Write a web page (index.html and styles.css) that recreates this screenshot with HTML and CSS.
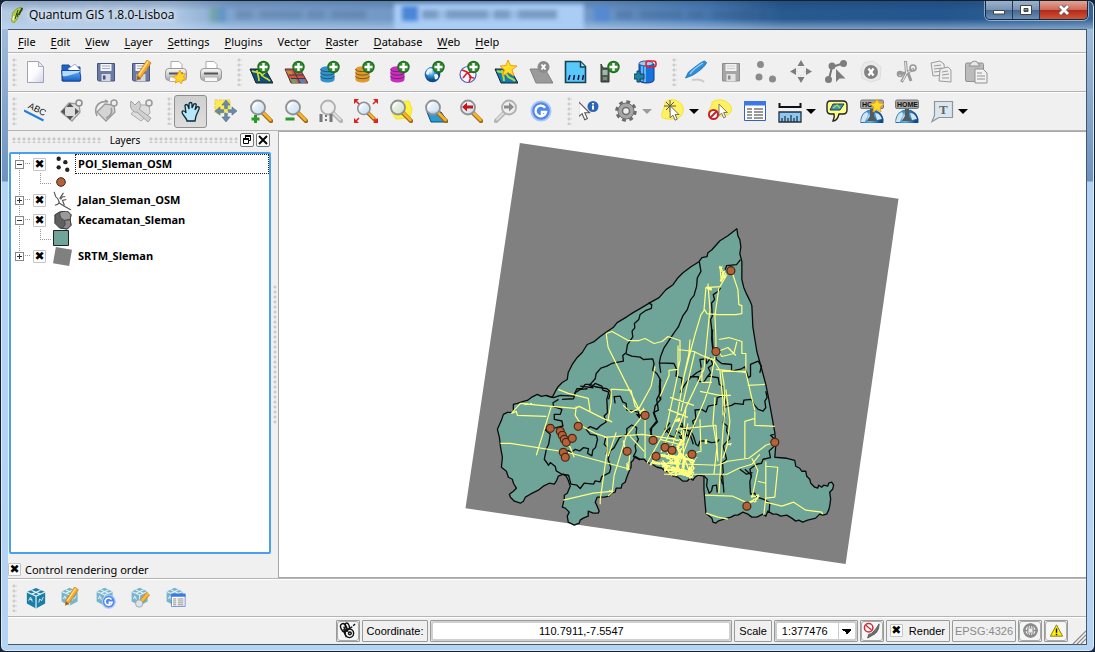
FILE: index.html
```html
<!DOCTYPE html>
<html lang="en">
<head>
<meta charset="utf-8">
<title>Quantum GIS 1.8.0-Lisboa</title>
<link rel="stylesheet" href="styles.css">
</head>
<body>
<svg class="defs" aria-hidden="true">
  <defs>
    <linearGradient id="gPage" x1="0" y1="0" x2="1" y2="1"><stop offset="0" stop-color="#fff"/><stop offset=".5" stop-color="#fdfdff"/><stop offset="1" stop-color="#cfd3ea"/></linearGradient>
    <linearGradient id="gBlue" x1="0" y1="0" x2="0" y2="1"><stop offset="0" stop-color="#6fb4f5"/><stop offset="1" stop-color="#1560c8"/></linearGradient>
    <linearGradient id="gGrey" x1="0" y1="0" x2="0" y2="1"><stop offset="0" stop-color="#fafafa"/><stop offset="1" stop-color="#a9a9a9"/></linearGradient>
    <linearGradient id="gLens" x1="0" y1="0" x2="1" y2="1"><stop offset="0" stop-color="#fff"/><stop offset="1" stop-color="#bcd8f2"/></linearGradient>
    <radialGradient id="gGlobe" cx=".4" cy=".35"><stop offset="0" stop-color="#d5ecfa"/><stop offset=".45" stop-color="#3f9bd8"/><stop offset="1" stop-color="#0e4a8c"/></radialGradient>
    <symbol id="badge" viewBox="0 0 24 24"><circle cx="14.500" cy="7" r="6.200" fill="#1d6b1d"/><circle cx="14.500" cy="7" r="5" fill="#2f8a2c"/><path d="M14.500 3v8M10.500 7h8" stroke="#fff" stroke-width="2.400"/></symbol>
    <symbol id="lens" viewBox="0 0 24 24"><path d="M14 14l8 8" stroke="#9b6a12" stroke-width="4.500" stroke-linecap="round"/><path d="M14 13.500l7.500 7.500" stroke="#fbb32b" stroke-width="2.500" stroke-linecap="round"/><circle cx="9" cy="8.500" r="7" fill="url(#gLens)" fill-opacity=".85" stroke="#8e9297" stroke-width="1.800"/><path d="M4.500 8a5 5 0 0 1 4-4" stroke="#fff" stroke-width="1.500" fill="none"/></symbol>
    <symbol id="lensGrey" viewBox="0 0 24 24"><path d="M14 14l8 8" stroke="#b5b5b5" stroke-width="4.500" stroke-linecap="round"/><path d="M14 13.500l7 7" stroke="#ddd" stroke-width="2" stroke-linecap="round"/><circle cx="9" cy="8.500" r="7" fill="#eee" stroke="#b0b0b0" stroke-width="1.800"/></symbol>
    <symbol id="floppy" viewBox="0 0 24 24"><path d="M3.500 3.500h17v17.500h-16l-1-1z" fill="#6b7ba5" stroke="#4a5679"/><path d="M6.500 4h11v7h-11z" fill="#f4f6fb"/><path d="M8 6h8M8 8.500h8" stroke="#a5acc0"/><path d="M7.500 14h9v7h-9z" fill="#d4d8e2"/><path d="M9 15.500h2.500v4h-2.500z" fill="#4a5679"/></symbol>
    <symbol id="printer" viewBox="0 0 24 24"><path d="M7 9V1.500h8l3 3V9z" fill="#fff" stroke="#aaa"/><rect x="1.500" y="8.500" width="21" height="12" rx="3.500" fill="url(#gGrey)" stroke="#999"/><path d="M5 13.500h14" stroke="#555" stroke-width="2"/><path d="M5.500 17h13v4.500h-13z" fill="#f7f7f7" stroke="#b0b0b0"/></symbol>
    <symbol id="star" viewBox="0 0 24 24"><path d="M12 0l2.500 7L22 6l-4.500 6 5.500 4.500-7 .5-1.500 7-4.500-5-6 3.500 1.500-7L0 11.500l7-2.500z" fill="#ffd528" stroke="#ef9f14" stroke-width="1.500"/></symbol>
    <symbol id="pencil" viewBox="0 0 24 24"><path d="M17 1l4 3-9.500 14-4.500 3 .5-5.500z" fill="#f9a825" stroke="#c57a10" stroke-width=".8"/><path d="M18 2.500L9 16" stroke="#ffe08a" stroke-width="1.500"/><path d="M7 21l.5-4 3 2z" fill="#8a5a20"/></symbol>
    <symbol id="db" viewBox="0 0 24 24"><path d="M1.500 9v10.500c0 4 14 4 14 0V9z"/><ellipse cx="8.500" cy="9" rx="7" ry="2.800"/><path d="M1.500 9c0 3.500 14 3.500 14 0M1.500 12.500c0 3.500 14 3.500 14 0M1.500 16c0 3.500 14 3.500 14 0" fill="none" stroke="#222" stroke-opacity=".55"/></symbol>
    <symbol id="globe" viewBox="0 0 24 24"><circle cx="12" cy="12" r="11" fill="url(#gGlobe)"/><path d="M5 5c4-3 8-2 7 1s-5 2-5 5-5 1-4-2zM14 12c4-2 7 0 6 4s-6 4-5 0z" fill="#e9f5fb"/></symbol>
    <symbol id="arrow" viewBox="0 0 24 24"><path d="M3 1v17l4-3.500 3 7 3-1.500-3-6.500h5.500z" fill="#fff" stroke="#555" stroke-width="1.200"/></symbol>
    <symbol id="cross4" viewBox="0 0 24 24"><path d="M12 0l4.500 5.500h-3v4h-3v-4h-3zM12 24l4.500-5.500h-3v-4h-3v4h-3zM0 12l5.500-4.500v3h4v3h-4v3zM24 12l-5.500-4.500v3h-4v3h4v3z"/></symbol>
    <symbol id="cube" viewBox="0 0 24 24"><path d="M12 1l10 4.500v12.500l-10 5.500-10-5.500V5.500z"/><path d="M2 5.500l10 4.500 10-4.500M12 10v13.500M7 3.500l10 4.500M17 3.500L7 8" stroke="#e4f2f7" fill="none" stroke-width="1.300"/><path d="M4 15l2-4 2 5M15 17l1-4 2 2 2-4M5 13.500h3" stroke="#e4f2f7" fill="none"/></symbol>
    <symbol id="table" viewBox="0 0 24 24"><path d="M1.500 2.500h21v19h-21z" fill="#fff" stroke="#3261c4"/><path d="M1 2h22v4.500H1z" fill="#3a78e8"/><path d="M4 10h5M11 10h9M4 13h5M11 13h9M4 16h5M11 16h9M4 19h5M11 19h9" stroke="#777" stroke-width="1.300"/></symbol>
    <symbol id="gBadge" viewBox="0 0 24 24"><circle cx="12" cy="12" r="10.500" fill="#5188ea" stroke="#a9c5f7" stroke-width="2"/><path d="M16.500 8.500A5.800 5.800 0 1 0 17.500 13h-4.500v3.500" fill="none" stroke="#fff" stroke-width="2.600"/></symbol>
    <symbol id="home" viewBox="0 0 24 24"><circle cx="12" cy="22" r="11.500" fill="url(#gGlobe)"/><path d="M3 16c3-4 5-3 5-1s-2 4-3 8H1c0-3 1-5 2-7zM15 14c4 0 6 3 7 6l-5 1z" fill="#d3e6ef"/><path d="M10 8h4v9l3 5H7l3-5z" fill="#555a5e"/><rect x=".5" y="1" width="23" height="8.500" rx="1.500" fill="#a6a6a6" stroke="#777"/></symbol>
  </defs>
</svg>

<div class="window">
  <header class="titlebar">
    <div class="backdrop" aria-hidden="true"><i class="blob drive"></i><i class="lit"></i><i class="blob doc1"></i><i class="blob doc2"></i><i class="smear s1"></i><i class="smear s2"></i><i class="smear s3"></i></div>
    <svg class="appicon" viewBox="0 0 16 16"><path d="M13 0c1 3-2 5-3 8s-2 5-5 8c-3-1-3-4-2-5S2 7 5 4s5-3 8-4z" fill="#b4cb45" stroke="#7f9930" stroke-width=".8"/><path d="M13 1c0 3-3 4-3 7" stroke="#2c4a12" stroke-width="2" fill="none"/><path d="M9 3L6 12M7 7l2 0-1 3" stroke="#31461a" stroke-width="1" fill="none"/><path d="M5 9l-1 4" stroke="#f4f9c0" stroke-width="1.500"/></svg>
    <h1>Quantum GIS 1.8.0-Lisboa</h1>
    <div class="winbtns">
      <button class="min" aria-label="Minimize"><svg viewBox="0 0 12 12"><path d="M.5 6.500h11v3.500H.5z" fill="#fff" stroke="#444"/></svg></button><button class="max" aria-label="Maximize"><svg viewBox="0 0 12 12"><path d="M.5 1.500h11v9H.5zM4 4.500h4v3H4z" fill="#fff" fill-rule="evenodd" stroke="#444"/></svg></button><button class="close" aria-label="Close"><svg viewBox="0 0 14 12"><path d="M3 2l8 8M11 2l-8 8" stroke="#555" stroke-width="4.500"/><path d="M3 2l8 8M11 2l-8 8" stroke="#fff" stroke-width="2.800"/></svg></button>
    </div>
  </header>

  <div class="client">
    <nav class="menubar">
      <button><u>F</u>ile</button><button><u>E</u>dit</button><button><u>V</u>iew</button><button><u>L</u>ayer</button><button><u>S</u>ettings</button><button><u>P</u>lugins</button><button>Vect<u>o</u>r</button><button><u>R</u>aster</button><button><u>D</u>atabase</button><button><u>W</u>eb</button><button><u>H</u>elp</button>
    </nav>

    <div class="toolbar">
      <div class="group"><i class="grip"></i>
        <button aria-label="New project"><svg viewBox="0 0 24 24"><path d="M3.500 1.500h11l5 5v16h-16z" fill="url(#gPage)" stroke="#9fa3b5"/><path d="M14.500 1.500v5h5z" fill="#e8eaf4" stroke="#a9adc0"/></svg></button>
        <button aria-label="Open project"><svg viewBox="0 0 24 24"><path d="M3 5h7l1 2h10v14H3z" fill="#1f63c6" stroke="#164a9c"/><path d="M9 9l7-5 5 6-4 7z" fill="#fff" stroke="#aac"/><path d="M2.500 10.500h18c-1 3 2 2 1 10.500H4z" fill="url(#gBlue)" stroke="#164a9c"/><path d="M3.500 16c5 1 10-2 17.500-4l-.5-1h-17z" fill="#b5dcff"/></svg></button>
        <button aria-label="Save project"><svg viewBox="0 0 24 24"><use href="#floppy"/></svg></button>
        <button aria-label="Save project as"><svg viewBox="0 0 24 24"><use href="#floppy"/><use href="#pencil" x="1" y="-1"/></svg></button>
        <button aria-label="New print composer"><svg viewBox="0 0 24 24"><use href="#printer"/><use href="#star" x="9" y="10" width="14" height="14"/></svg></button>
        <button aria-label="Composer manager"><svg viewBox="0 0 24 24"><use href="#printer"/></svg></button>
      </div>
      <div class="group"><i class="grip"></i>
        <button aria-label="Add vector layer"><svg viewBox="0 0 24 24"><path d="M1 9h15l8 14H7z" fill="#154f78" stroke="#123"/><path d="M3 11c4 2 8 0 10 4s4 2 8 6M8 10c0 4 2 6 2 11M12 16l5-4" stroke="#cde02c" stroke-width="1.600" fill="none"/><use href="#badge"/></svg></button>
        <button aria-label="Add raster layer"><svg viewBox="0 0 24 24"><path d="M1 9h15l8 14H7z" fill="#c9564c" stroke="#533"/><path d="M2 11h5l2 4H5z" fill="#c98a3c"/><path d="M6 18h5l3 5H8z" fill="#7c9a62"/><path d="M5 15h14M7 18.500h14M9 9l7 14" stroke="#4a3040"/><path d="M15 19h5l2 4h-5z" fill="#5b7fb0"/><use href="#badge"/></svg></button>
        <button aria-label="Add PostGIS layer" class="c-blue"><svg viewBox="0 0 24 24"><use href="#db"/><use href="#badge"/></svg></button>
        <button aria-label="Add SpatiaLite layer" class="c-orange"><svg viewBox="0 0 24 24"><use href="#db"/><use href="#badge"/></svg></button>
        <button aria-label="Add MSSQL layer" class="c-pink"><svg viewBox="0 0 24 24"><use href="#db"/><use href="#badge"/></svg></button>
        <button aria-label="Add WMS layer"><svg viewBox="0 0 24 24"><use href="#globe" x="0" y="6" width="17" height="17"/><use href="#badge"/></svg></button>
        <button aria-label="Add WFS layer"><svg viewBox="0 0 24 24"><circle cx="9" cy="14.500" r="8" fill="#f6f6ff" stroke="#4b63b8" stroke-width="1.200"/><path d="M3 10l5 2 4 5-2 5M9 13l5-2M4 18l4-5M10 17l5 1" stroke="#dc1d2c" stroke-width="1.600" fill="none"/><use href="#badge"/></svg></button>
        <button aria-label="New shapefile layer"><svg viewBox="0 0 24 24"><path d="M1 9h15l8 14H7z" fill="#1878b0" stroke="#123"/><path d="M3 11c4 2 8 0 10 4s4 2 8 6M8 10c0 4 2 6 2 11" stroke="#a6dc3c" stroke-width="2" fill="none"/><path d="M14 0l2.500 5.500 6.500.5-5 4 2 6-6-3.500L8.500 16l2-6-4.500-4 6-.5z" fill="#ffdf25" stroke="#f09c12"/></svg></button>
        <button aria-label="Remove layer"><svg viewBox="0 0 24 24"><path d="M1 9h15l8 14H7z" fill="#9a9a9a" stroke="#818181"/><circle cx="14.500" cy="7" r="6" fill="#8b8b8b"/><path d="M12.500 4.500l4 5M16.500 4.500l-4 5" stroke="#fff" stroke-width="2"/></svg></button>
        <button aria-label="Add delimited text layer"><svg viewBox="0 0 24 24"><path d="M1.500 1.500h15l5 5v16h-20z" fill="#58c9f8" stroke="#164050" stroke-width="1.600"/><path d="M16.500 2v5h5" stroke="#164050" stroke-width="1.500" fill="#a9e2fa"/><path d="M6 15l-1.500 5M10.500 15l-1 5M15 15l-1 5M19.500 15l-1 5" stroke="#114" stroke-width="1.500"/></svg></button>
        <button aria-label="Create GPX layer"><svg viewBox="0 0 24 24"><path d="M2 4l2 4h6v14H2z" fill="#4d5b50" stroke="#2e3830"/><path d="M3.500 10h5v5h-5z" fill="#9fb7a5"/><path d="M4 17h4v3h-4z" fill="#7d8a80"/><use href="#badge"/></svg></button>
        <button aria-label="Add Oracle layer"><svg viewBox="0 0 24 24"><path d="M5 4v16c0 4 15 4 15 0V4z" fill="#1573dc" stroke="#123a8c"/><path d="M8 5v16M11 6v16" stroke="#8ac3fa" stroke-width="1.500"/><ellipse cx="12" cy="3.500" rx="7" ry="2.500" fill="#a7c9ee" stroke="#2356a0"/><rect x="12" y="1" width="10" height="6" rx="2.500" fill="none" stroke="#ec1c2c" stroke-width="1.600"/><path d="M3 11h3v3h4v5H6v3H3v-3H0v-5h3z" fill="#1b83a4" stroke="#17475c"/></svg></button>
      </div>
      <div class="group"><i class="grip"></i>
        <button aria-label="Toggle editing"><svg viewBox="0 0 24 24"><path d="M8 20c5-1 9-1 12 2" stroke="#ccc" stroke-width="2" fill="none"/><path d="M20.500 1l2 1.500c0 3-10 11-14.500 13L1.500 18l3-6c4-3 12-10 16-11z" fill="#2b90dc" stroke="#1b6fb4" stroke-width=".8"/><path d="M19 3C14 6 9 10 6 14" stroke="#9ad1f7" stroke-width="1.300" fill="none"/></svg></button>
        <button aria-label="Save edits" disabled><svg viewBox="0 0 24 24"><path d="M3.500 3.500h17v17.500h-17z" fill="#a5a5a5" stroke="#8e8e8e"/><path d="M6.500 4h11v7h-11z" fill="#f1f1f1"/><path d="M8 6h8M8 8.500h8" stroke="#ccc"/><path d="M7.500 14h9v7h-9z" fill="#e2e2e2"/><path d="M9 15.500h2.500v4h-2.500z" fill="#8c8c8c"/></svg></button>
        <button aria-label="Add feature" disabled><svg viewBox="0 0 24 24" fill="#8b8b8b"><circle cx="6.500" cy="4.500" r="3.500"/><circle cx="5" cy="17" r="3.500"/><circle cx="18.500" cy="19" r="3.500"/></svg></button>
        <button aria-label="Move feature" disabled><svg viewBox="0 0 24 24" fill="#7d7d7d"><path d="M12 0l3.500 6h-7zM12 23l3.500-6h-7zM1 11.500l6-3.500v7zM23 11.500l-6-3.500v7z"/><circle cx="12" cy="11.500" r="4" fill="none" stroke="#ccc" stroke-dasharray="1 2"/></svg></button>
        <button aria-label="Node tool" disabled><svg viewBox="0 0 24 24" fill="#7d7d7d"><path d="M5 19L8 7l12-4" stroke="#777" stroke-width="2" fill="none"/><circle cx="8" cy="6" r="3.500"/><circle cx="19.500" cy="3.500" r="3.500"/><circle cx="4.500" cy="19.500" r="3.500"/><path d="M12 9v13l3.500-3.500h6z"/></svg></button>
        <button aria-label="Delete selected" disabled><svg viewBox="0 0 24 24"><path d="M5 3l9-2 8 6-1 12-9 3-9-4-1-9z" fill="#ebebeb" stroke="#dcdcdc"/><circle cx="12" cy="12" r="7" fill="#838383"/><path d="M9.500 8.500l5 7M14.500 8.500l-5 7" stroke="#fff" stroke-width="2.200"/></svg></button>
        <button aria-label="Cut features" disabled><svg viewBox="0 0 24 24" fill="none"><path d="M11.500 1l1 12-5 9M20 9l-8 4-8 .5M14 13l3 8" stroke="#999" stroke-width="3"/><path d="M11.500 2l1 11-4 8M19 9.500l-7 3.500" stroke="#eee"/><circle cx="19" cy="8" r="3" stroke="#999" stroke-width="1.600"/><circle cx="6" cy="14" r="2.500" stroke="#999" stroke-width="1.600"/></svg></button>
        <button aria-label="Copy features" disabled><svg viewBox="0 0 24 24" fill="#eee" stroke="#9b9b9b"><path d="M2 3l9-2 4 3 1 11-12 1z"/><path d="M5 6l7-1M5 9l8-1M5 12l9-1"/><path d="M11 9l8-2 3 3v12l-12-1z"/><path d="M13 12l6-1M13 15l7-1M13 18l7 0"/></svg></button>
        <button aria-label="Paste features" disabled><svg viewBox="0 0 24 24" stroke="#909090"><rect x="1.500" y="3" width="18" height="18.500" rx="1.500" fill="#bbb"/><path d="M5 6l3-4c1-1 4-1 5 0l3 4z" fill="#e9e9e9"/><path d="M11 9h8l4 4v10H11z" fill="#f2f2f2"/><path d="M13 13h5M13 16h8M13 19h8"/></svg></button>
      </div>
    </div>

    <div class="toolbar">
      <div class="group"><i class="grip"></i>
        <button aria-label="Labeling"><svg viewBox="0 0 24 24"><g transform="rotate(27 12 12)"><text x="3" y="13" class="abc">ABC</text><path d="M1 17h22" stroke="#1e7fe0" stroke-width="2.200"/></g></svg></button>
        <button aria-label="Move label" disabled><svg viewBox="0 0 24 24"><path d="M2 13l8-9 10 1 1 8-8 9z" fill="#ddd" stroke="#9c9c9c" stroke-width="1.300"/><circle cx="20" cy="4" r="3" fill="#eee" stroke="#8c8c8c" stroke-width="1.500"/><path d="M11 4l3.500 4h-7zM11 21l3.500-4h-7zM2 12.500l4-3.500v7zM20 12.500l-4-3.500v7z" fill="#555"/></svg></button>
        <button aria-label="Rotate label" disabled><svg viewBox="0 0 24 24"><path d="M3 13l8-8 9 1 1 7-9 9z" fill="#d4d4d4" stroke="#999" stroke-width="1.300"/><circle cx="20" cy="4" r="3" fill="#eee" stroke="#999" stroke-width="1.500"/><path d="M3 17C-1 8 5 1 14 3M14 3l-3-2M17 9c2 4-1 9-5 10" fill="none" stroke="#999" stroke-width="1.600"/></svg></button>
        <button aria-label="Change label" disabled><svg viewBox="0 0 24 24"><path d="M2 15l8-9 10 0 1 8-9 8z" fill="#ddd" stroke="#aaa"/><circle cx="20" cy="4" r="3" fill="#eee" stroke="#999" stroke-width="1.500"/><path d="M2 2l4 4 4-4c2 3 2 6 0 8l12 9-3 4-11-10C4 14 0 9 2 2z" fill="#d0d0d0" stroke="#a0a0a0"/></svg></button>
      </div>
      <div class="group"><i class="grip"></i>
        <button class="pressed" aria-label="Pan map"><svg viewBox="0 0 24 24"><path d="M8 22c0-3-5-6-5-9 1-2 3-1 4 1L6 7c0-2 2-2 3 0l1 3V5c0-2 3-2 3 0v4l2-4c1-1 3 0 2 2l-1 4 2-3c1-1 3 0 2 2l-3 7-1 5z" fill="#b9e6f8" stroke="#0c2a38" stroke-width="1.300"/></svg></button>
        <button aria-label="Pan map to selection"><svg viewBox="0 0 24 24"><path d="M1 1h15v8l-5 5H1z" fill="#ffe957" stroke="#e5cf3b" stroke-dasharray="3 1"/><use href="#cross4" fill="#6a8ba8" stroke="#4a6b88" stroke-width=".6" x="1" y="1" width="22" height="22"/></svg></button>
        <button aria-label="Zoom in"><svg viewBox="0 0 24 24"><use href="#lens"/><path d="M6.500 16v8M2.500 20h8" stroke="#2a9a2a" stroke-width="3"/></svg></button>
        <button aria-label="Zoom out"><svg viewBox="0 0 24 24"><use href="#lens"/><path d="M1.500 20h9" stroke="#2a9a2a" stroke-width="3"/></svg></button>
        <button aria-label="Zoom to native resolution" disabled><svg viewBox="0 0 24 24"><use href="#lensGrey"/><path d="M2 15v8M12 15v8" stroke="#777" stroke-width="3"/><path d="M7 16v2M7 20v2" stroke="#777" stroke-width="2"/></svg></button>
        <button aria-label="Zoom full"><svg viewBox="0 0 24 24"><use href="#lens" x="2" y="2" width="21" height="21"/><path d="M0 0h5L0 5zM24 0v5l-5-5zM0 24v-5l5 5zM24 24h-5l5-5z" fill="#d22"/><path d="M2 2l3 3M22 2l-3 3M2 22l3-3M22 22l-2-2" stroke="#d22" stroke-width="1.500"/></svg></button>
        <button aria-label="Zoom to selection"><svg viewBox="0 0 24 24"><path d="M4 3l16-1 3 8-2 9-14 1-4-6z" fill="#fff23c" stroke="#f2e339"/><use href="#lens"/></svg></button>
        <button aria-label="Zoom to layer"><svg viewBox="0 0 24 24"><path d="M3 13h14l7 10H7z" fill="#2a9ad2" stroke="#144e70"/><use href="#lens"/></svg></button>
        <button aria-label="Zoom last"><svg viewBox="0 0 24 24"><use href="#lens"/><path d="M3 8l5-4.500v3h6v3H8v3z" fill="#c81414"/></svg></button>
        <button aria-label="Zoom next" disabled><svg viewBox="0 0 24 24"><g transform="translate(24 0) scale(-1 1)"><use href="#lensGrey"/></g><path d="M20 8l-5-4.500v3h-5v3h5v3z" fill="#8b8b8b"/></svg></button>
        <button aria-label="Refresh"><svg viewBox="0 0 24 24"><use href="#gBadge" x="1" y="1" width="22" height="22"/></svg></button>
      </div>
      <div class="group"><i class="grip"></i>
        <button aria-label="Identify features"><svg viewBox="0 0 24 24"><use href="#arrow" x="-3" y="2" width="21" height="21"/><circle cx="14" cy="7.500" r="5.500" fill="#2c66b4"/><path d="M14 4v1.500M14 6.500v4" stroke="#fff" stroke-width="2"/></svg></button>
        <button class="drop dim" aria-label="Run feature action" disabled><svg viewBox="0 0 24 24"><circle cx="12" cy="12" r="9" fill="none" stroke="#6c6c6c" stroke-width="3.500" stroke-dasharray="3.700 3.370"/><circle cx="12" cy="12" r="8" fill="#a5a5a5" stroke="#6f6f6f"/><circle cx="12" cy="12" r="3.500" fill="#eee" stroke="#6f6f6f" stroke-width="1.500"/></svg></button>
        <button class="drop" aria-label="Select features"><svg viewBox="0 0 24 24"><path d="M4 3c7-4 14-2 17 3s0 10-2 12-13 3-17 1 3-12 2-16z" fill="#fff25e" stroke="#f1e338"/><path d="M9 1v12M3 7h12M5 3l8 8M13 3l-8 8" stroke="#555"/><use href="#arrow" x="7" y="6" width="17" height="17"/></svg></button>
        <button aria-label="Deselect all"><svg viewBox="0 0 24 24"><path d="M4 3c7-4 14-2 18 3s-1 10-3 10-14 3-18 1 4-10 3-14z" fill="#fff25e" stroke="#f1e338"/><use href="#arrow" x="9" y="4" width="16" height="17"/><circle cx="5.500" cy="15.500" r="4.500" fill="#fff" stroke="#c8202a" stroke-width="2"/><path d="M2.500 18.500l6-6" stroke="#c8202a" stroke-width="2"/></svg></button>
        <button aria-label="Open attribute table"><svg viewBox="0 0 24 24"><use href="#table"/></svg></button>
        <button class="drop" aria-label="Measure"><svg viewBox="0 0 24 24"><path d="M1.500 4v4h21V4" fill="none" stroke="#111" stroke-width="2"/><path d="M1 13h22v10H1z" fill="#8cc8f3" stroke="#23303a" stroke-width="1.300"/><path d="M4 23v-4M7 23v-6M10 23v-4M13 23v-7M16 23v-4M19 23v-6" stroke="#23303a" stroke-width="1.200"/></svg></button>
        <button aria-label="Map tips"><svg viewBox="0 0 24 24"><path d="M5 2h13c3 0 4 2 4 4v5c0 3-2 4-4 4h-4c-1 4-3 7-6 7 1-2 2-4 1-7H6c-3 0-4-2-4-4V6c0-2 1-4 3-4z" fill="#ffff8a" stroke="#222" stroke-width="1.400"/><path d="M8 5h11l-4 6H5z" fill="#3d97b4" stroke="#1d4250"/><path d="M8 9l4-3 3 3" stroke="#c2d854" fill="none" stroke-width="1.300"/></svg></button>
        <button aria-label="New bookmark"><svg viewBox="0 0 24 24"><use href="#home"/><text x="2" y="8" class="home">HO</text><path d="M17 0l2 4 5 1-4 3 1 5-4-2.500L13 13l1-5-4-3 5-1z" fill="#ffdc20" stroke="#f0a51a"/></svg></button>
        <button aria-label="Show bookmarks"><svg viewBox="0 0 24 24"><use href="#home"/><text x="2" y="8" class="home">HOME</text></svg></button>
        <button class="drop" aria-label="Text annotation"><svg viewBox="0 0 24 24"><path d="M4.500 2.500h18v16H9l-7 4 2.500-6z" fill="#dce6ee" stroke="#8c959c" stroke-width="1.200"/><text x="9" y="15" class="anno">T</text></svg></button>
      </div>
    </div>

    <main class="workspace">
      <section class="dock" aria-label="Layers">
        <div class="docktitle"><i></i><span>Layers</span><i></i>
          <button aria-label="Float"><svg viewBox="0 0 12 12" fill="#fff" stroke="#000"><path d="M4.500 1.500h5v5h-5z"/><path d="M4 2h6" stroke-width="2"/><path d="M2.500 4.500h5v5h-5z"/><path d="M2 5h6" stroke-width="2"/></svg></button>
          <button aria-label="Close panel"><svg viewBox="0 0 12 12"><path d="M2 2l8 8M10 2l-8 8" stroke="#000" stroke-width="1.800"/></svg></button>
        </div>
        <ul class="tree">
          <li class="row"><button class="exp" aria-label="Collapse"></button><input type="checkbox" id="l1" checked><svg viewBox="0 0 20 20" fill="#222"><circle cx="6" cy="4" r="2.300"/><circle cx="13" cy="7.500" r="2.300"/><circle cx="6" cy="13" r="2.300"/><circle cx="15" cy="15.500" r="2.300"/></svg><label for="l1" class="focus">POI_Sleman_OSM</label></li>
          <li class="sub"><svg viewBox="0 0 16 16"><circle cx="8" cy="8" r="4.300" fill="#b5623a" stroke="#3d2012"/></svg></li>
          <li class="row"><button class="exp plus" aria-label="Expand"></button><input type="checkbox" id="l2" checked><svg viewBox="0 0 20 20" fill="none" stroke="#555" stroke-width="1.200"><path d="M1 1c2 2 0 5 4 7l2 5 5 3 7 4M2 15l3-1 2-3M7 8l4-6M8 9l2-3 3 0M12 15l-2-5 4-1"/></svg><label for="l2">Jalan_Sleman_OSM</label></li>
          <li class="row"><button class="exp" aria-label="Collapse"></button><input type="checkbox" id="l3" checked><svg viewBox="0 0 20 20"><path d="M2 4l5-3 8-1 4 4-1 5 1 6-4 4-8-1-5-5z" fill="#606060" stroke="#333"/><path d="M8 1l7-1 4 4-1 5-6 1-4-3-1-4z" fill="#9a9a9a" stroke="#444"/><path d="M12 10l6-1 1 6-4 4-5-1 3-4z" fill="#888" stroke="#444"/></svg><label for="l3">Kecamatan_Sleman</label></li>
          <li class="sub"><svg viewBox="0 0 16 16"><path d="M.5.500h15v15H.5z" fill="#6fa598" stroke="#222"/></svg></li>
          <li class="row"><button class="exp plus" aria-label="Expand"></button><input type="checkbox" id="l4" checked><svg viewBox="0 0 20 20"><path d="M3 0l17 3-3 17L0 17z" fill="#808080"/></svg><label for="l4">SRTM_Sleman</label></li>
        </ul>
        <div class="order"><input type="checkbox" id="order" checked><label for="order">Control rendering order</label></div>
      </section>
      <i class="splitter"></i>
      <section class="canvas" aria-label="Map canvas">
        <svg viewBox="279 132 807 446">
          <defs><filter id="rough" x="-5%" y="-5%" width="110%" height="110%"><feTurbulence type="fractalNoise" baseFrequency=".16" numOctaves="1" seed="4"/><feDisplacementMap in="SourceGraphic" scale="4" xChannelSelector="R" yChannelSelector="G"/></filter></defs>
          <path d="M519.500 143L899 199l-53 366L465 509z" fill="#808080"/>
          <path class="edge" d="M737 229L738 236L740 240L741 247L740 254L742 262L742 280L744 288L747 295L750 301L752 306L753 327L757 352L762 370L766 385L769 400L775 433L776 446L775 458L787 459L791 460L795 461L796 467L800 469L802 472L806 472L807 477L810 480L811 484L815 488L818 489L819 486L822 488L824 486L828 487L829 484L832 483L834 486L833 490L830 493L831 500L830 507L829 511L827 515L823 516L820 515L816 519L812 520L808 521L803 523L799 521L796 522L792 519L787 516L781 517L777 515L773 515L768 512L766 517L763 515L757 518L752 518L748 515L743 513L738 516L735 516L731 518L727 519L721 521L718 522L716 524L713 523L712 519L706 514L705 503L704 490L704 477L698 476L695 478L693 481L690 479L687 482L683 482L678 478L673 477L670 473L665 472L662 469L657 468L652 465L647 463L644 460L640 460L635 457L633 461L631 463L631 468L629 472L627 477L625 483L622 485L621 489L616 489L615 493L611 494L609 497L604 498L597 498L595 503L597 507L599 512L598 514L593 514L588 512L588 517L583 519L580 521L579 524L574 526L568 523L567 517L569 513L565 509L562 508L564 500L564 496L567 494L570 487L568 481L566 477L563 475L558 477L556 482L554 485L549 484L543 487L538 491L530 495L525 498L523 502L520 504L514 502L510 498L509 495L513 492L516 489L513 484L512 480L508 478L506 472L501 468L502 458L500 447L499 438L497 430L501 421L503 415L507 413L513 413L513 405L517 404L523 402L527 401L531 398L537 395L541 397L546 396L552 398L555 392L558 387L562 383L567 380L568 373L572 365L577 358L582 353L587 345L594 342L600 337L607 332L613 328L617 323L627 317L633 313L640 309L650 303L659 298L666 290L673 285L678 278L683 273L691 267L699 262L702 258L707 257L708 253L712 250L720 241L728 236z"/>
          <g class="line" transform="translate(540 220) scale(.3333)"><path d="M478 125L483 155L472 175L470 200L462 228L452 240L442 270L428 290L415 322L402 340L372 385L362 410L358 430L362 460M325 250L335 255L334 266L318 272L300 285L296 300L283 312L284 325L276 335L278 352L262 375L258 400L248 408L250 425L215 432L200 440L182 446L168 462L165 478L150 495L135 495L125 508L110 508L100 530L60 528L40 535L20 530M258 403L275 410L300 413L310 420L338 418L342 432L338 452L350 462L362 482L358 500L360 540M358 430L402 432L410 450L408 470L426 476L425 520M602 120L590 135L560 138L556 150M542 205L535 215L520 225L524 240L515 250L517 290L512 300L515 325L520 395M150 495L165 502L200 508L212 518L205 540M120 500L160 505"/></g>
          <g class="line" transform="translate(480 380) scale(.3333)"><path d="M325 15L335 22L345 12L365 20L368 32L386 38L380 60L382 100L372 110L378 128L362 138L350 150L330 142L318 150L330 165L348 168L352 180L346 205L338 212L335 230L322 222L325 208L310 205L298 215L285 210L272 220L262 212M235 60L218 70L220 82L245 90L240 105L222 105L222 120L245 125L248 140L228 145L195 152L210 165L205 195L198 210L192 240L205 258L210 250L225 262L228 275L245 285L265 288L272 315L290 318L300 328L312 312L340 315L345 305L360 308L365 292L388 280L392 265L384 240L390 215L402 205L418 175L440 165L440 148L455 137L470 145L468 165L475 180L465 200L468 215L460 232L480 242M245 60L280 58L285 40L300 30L322 28M405 72L402 52L420 50L428 68L438 72L440 92L475 98L478 115L470 105L500 112M540 0L538 45L530 60L535 92L520 100L530 125L510 150L518 178M378 170L372 195L382 205L378 225M570 130L555 150L570 165"/></g>
          <g class="line" transform="translate(680 330) scale(.3333)"><path d="M98 0L95 25L98 55L110 90L125 102L155 105L155 125L185 118L195 112L205 145L212 140L212 105L235 95L245 110L240 130M0 190L15 165L28 148L50 130L65 122L60 90L78 88L80 102L92 85L98 105L85 115L92 130L80 145L72 158L55 155L55 142L30 142M85 140L115 145L118 165L130 172L130 195L138 220L130 235L155 228L165 222L190 225L192 212L215 210L222 225L235 240L250 245L258 235L255 215L262 205L258 185M132 198L112 205L110 225L85 230L78 248L65 240L45 242L48 268L38 275L42 290L32 305L40 320L48 345L55 350L60 335L78 335L95 340L112 338L118 330M130 235L135 255L130 280L142 290L140 305L150 328L138 340L130 350L140 390L128 400L130 430L122 445L128 465M282 315L272 318L285 330L282 352L268 365L272 385L250 390L245 402L230 405L210 420L215 445M180 420L200 435L218 430M0 290L15 295L20 320L30 315L40 345"/></g>
          <g class="line" transform="translate(640 380) scale(.3333)"><path d="M192 290L202 300L200 320L208 342L215 335L218 320L230 318L232 340M248 290L252 340M315 270L335 288L330 308L332 345L345 342L348 352L375 362L390 372L388 398M60 0L62 60L45 80L42 100L52 128L35 145L32 170M75 160L90 145L88 168L105 175L110 155L125 165L128 185L118 170M125 130L132 150L148 155L145 180"/></g>
          <g fill="none" stroke="#ffff80" stroke-width="1.200" stroke-linejoin="round">
            <path d="M500 444l10 0 57 9 63 17M511 414l9-10 20 2 35 3 4-2 10 5 16 8 6 2M511 414l5-2 1 4 29 1M551 407l-15 49M558 390l10 4 20 5 2 13M576 407l-1 9 7 11 13 7 12 4 0 13-7 50 0 4M606 334l6-2 16 9 11 0 6-2 9 5 8-2 6-5 12 4 0 20-2 9-9 1 0 5-9 21M606 334l2 14 31 62M655 367l-4 20-12 22-8 4-8-7M615 390l-4 0 0 13-3 17 4 3M615 390l16 1 4 16 10 9M678 346l0 28-12 56-19 34M678 350l16 2 8 4 12 4M645 417v42M616 433l-8 24M642 417l-16 20-12 39-2 17"/>
            <path d="M612 493l-4 4M613 492l-20 2-30 7M604 438L642 435L676 440M630 437l14 15M623 441l2 8 5 4-2 18M562 440l8 8 4 10"/>
            <path d="M720 266l1 12 3 0 2-5M727 275l-7 12-14 1-2 23-3 4-6 20-4 15-7 27-7 40-16 36M708 284l2 26-3 30-3 30-18 38-19 52M704 309l3 5 11 1 18 0 6-1 0-8-3-1-1-15-6-18M719 288l-4 28 1 22 0 14M716 352l-3 16-3 17-5 15-12 28-18 48M719 340l10-2 13 4 0 12 4 0v18l-24 0 2 12 1 28-2 20-4 62M704 357l10 4 6 10 3 30 0 15M737 342l-3 12-12 3-3-4M716 370l30 3 6 26 3 12M748 386l17-1M755 412v14l20 1M755 419l-10 3 0 38M695 352l-14 60M700 392l20 4 11 0M702 368l0 15 10 0M686 408l-3 30 1 36M676 430l40-4 2 36M700 420l1 32-16 4M660 440l23 6 5-22M661 464l57 2 10-4 21-3 17-13 9-3M664 475l63 0 12-6 13-4 8-10M752 459l6 12-6 28M766 462l0 36-2 18M758 482l8 2M766 467l12 1-3 30-9 1M705 496l28 1 15 7 10-6M706 514l12 4 10 2M766 503l16 4 12-4 12 8 16 2 1 2M726 390l4 32-3 25-4 12M670 398l24 8M668 410l20 8M718 352l10-4 8 8M690 340l-1 14-8 36M715 398l-2 26 4 24-3 27"/>
            <g filter="url(#rough)" stroke-width="2.500"><path d="M653 463l20 5 12 8 8 1M660 456l20 3 15 2M664 470l20 2 8 6M676 446l8 14-2 16M668 452l10 10 -2 12M674 456l6 18M676 422l4-3M640 414l4-4M690 474l3-14M670 464l10 0M726 446l6-1M720 266l2 6M706 288l6 2M724 272l-3 10M706 440v5M663 461l4 8M683 441l-6 6"/></g>
            <path stroke-width="1.500" filter="url(#rough)" d="M650 465l14-11 10 10 10-20-2-14M662 468l20-15 7 18 8-14M668 476l26-3M682 448l-6 24M686 455l8 14-6 8M672 440l12 2M751 497l8 0-3 4-9 3M627 463v8M610 490l3 3M524 405l10-1M660 462l10 12 12-4 12 4"/>
          </g>
          <g fill="#b4623a" stroke="#4b2512" stroke-width="1.200"><circle cx="731" cy="271" r="4"/><circle cx="716" cy="352" r="4"/><circle cx="645" cy="416" r="4"/><circle cx="550" cy="429" r="4"/><circle cx="560" cy="432" r="4"/><circle cx="562" cy="436" r="4"/><circle cx="564" cy="440" r="4"/><circle cx="566" cy="443" r="4"/><circle cx="572" cy="439" r="4"/><circle cx="578" cy="427" r="4"/><circle cx="563" cy="453" r="4"/><circle cx="565" cy="458" r="4"/><circle cx="627" cy="452" r="4"/><circle cx="653" cy="441" r="4"/><circle cx="656" cy="457" r="4"/><circle cx="665" cy="448" r="4"/><circle cx="672" cy="451" r="4"/><circle cx="692" cy="455" r="4"/><circle cx="775" cy="443" r="4"/><circle cx="747" cy="507" r="4"/></g>
        </svg>
      </section>
    </main>

    <div class="toolbar lower">
      <div class="group"><i class="grip"></i>
        <button aria-label="Offline editing" class="c-cube"><svg viewBox="0 0 24 24"><use href="#cube"/></svg></button>
        <button aria-label="Edit OSM data" class="c-cubelite"><svg viewBox="0 0 24 24"><use href="#cube" x="0" width="21" height="21"/><use href="#pencil" x="-1" y="-1"/></svg></button>
        <button aria-label="Refresh OSM data" class="c-cubelite"><svg viewBox="0 0 24 24"><use href="#cube" x="0" width="21" height="21"/><use href="#gBadge" x="7" y="8" width="16" height="16"/></svg></button>
        <button aria-label="Configure OSM data" class="c-cubelite"><svg viewBox="0 0 24 24"><use href="#cube" x="0" width="21" height="21"/><path d="M20 7l-8 9" stroke="#d88a17" stroke-width="5"/><path d="M20 7l-8 9" stroke="#fdb935" stroke-width="3"/><circle cx="10" cy="18" r="4" fill="#dfe3ee" stroke="#9aa"/></svg></button>
        <button aria-label="OSM table" class="c-cubelite"><svg viewBox="0 0 24 24"><use href="#cube" x="0" width="21" height="21"/><use href="#table" x="6" y="6" width="17" height="17"/></svg></button>
      </div>
    </div>

    <footer class="status">
      <span class="cell first"><button class="sbtn" aria-label="Toggle extents and mouse position"><svg viewBox="0 0 18 18" fill="none" stroke="#111" stroke-width="1.500"><ellipse cx="5" cy="6" rx="3" ry="4.500" transform="rotate(-25 5 6)"/><ellipse cx="9" cy="4.500" rx="2" ry="3.500" transform="rotate(-20 9 5)"/><circle cx="11" cy="12" r="4.500"/><circle cx="11.500" cy="12" r="1.500"/><path d="M5 10l3 6M4 8l6 2M8 9l6-4M15 4l2-2M5 5l2 4"/></svg></button></span>
      <label class="cell text" for="coord">Coordinate:</label>
      <span class="cell grow"><input id="coord" type="text" value="110.7911,-7.5547"></span>
      <label class="cell text" for="scale">Scale</label>
      <span class="cell"><select id="scale"><option>1:377476</option></select></span>
      <span class="cell"><button class="sbtn" aria-label="Stop rendering"><svg viewBox="0 0 18 18"><path d="M17 2c0 5-2 10-7 12l-5 3 1-4c4 0 8-6 11-11z" fill="#6f6f6f" stroke="#555"/><circle cx="6" cy="6" r="4.500" fill="#fff" stroke="#d22b38" stroke-width="1.600"/><path d="M3 3.500l6 5" stroke="#d22b38" stroke-width="1.500"/></svg></button></span>
      <span class="cell render"><input type="checkbox" id="render" checked><label for="render">Render</label></span>
      <span class="cell epsg">EPSG:4326</span>
      <span class="cell"><button class="sbtn" aria-label="CRS status"><svg viewBox="0 0 18 18" fill="none" stroke="#8b8b8b"><circle cx="9" cy="9" r="6.500" stroke-width="2.500"/><ellipse cx="9" cy="9" rx="3" ry="6" stroke-width="1.200"/><path d="M1 9h16M9 1v16" stroke-width="1.500"/><path d="M6.500 6.500h5v5h-5z" fill="#eee" stroke="#aaa"/></svg></button></span>
      <span class="cell"><button class="sbtn" aria-label="Messages"><svg viewBox="0 0 18 18"><path d="M9 3l6.500 12h-13z" fill="#ffee10" stroke="#8a7c00" stroke-linejoin="round"/><path d="M9 7v4.500M9 12.500v1.500" stroke="#111" stroke-width="1.500"/></svg></button></span>
      <svg class="sizegrip" viewBox="0 0 16 16"><path d="M3 16L16 3M7 16l9-9M11 16l5-5" stroke="#8a8a8a" stroke-width="1.200"/></svg>
    </footer>
  </div>
</div>
</body>
</html>
```
FILE: styles.css
```css
* { box-sizing: border-box; }
html, body { height: 100%; }
body {
  margin: 0;
  background: #14253c;
  color: #000;
  font: 11px/14px "Noto Sans", sans-serif;
  overflow: hidden;
}
button { margin: 0; padding: 0; border: 0; background: none; color: inherit; font: inherit; }
ul { margin: 0; padding: 0; list-style: none; }
svg { display: block; }
.defs { position: absolute; width: 0; height: 0; }

.window {
  display: flex;
  flex-direction: column;
  height: 100vh;
  padding: 0 7px 6px;
  border: 1px solid #16202d;
  border-radius: 7px 7px 6px 6px;
  background: linear-gradient(#a8c3e0 0, #6d93bf 180px, #b2d3f4 181px, #b4d4f4);
  box-shadow: inset 0 0 0 1px #dcecfb;
}

/* Title bar */
.titlebar {
  position: relative;
  display: flex;
  align-items: center;
  gap: 4px;
  height: 28px;
  margin: 0 -6px;
  padding-left: 7px;
  border-radius: 6px 6px 0 0;
  overflow: hidden;
  background: linear-gradient(90deg, #b4cae3, #b0c8e4 170px, #7fa4ce 230px, #7299c6 395px, #6f98c8 590px, #4b7db5 700px, #28598f 780px, #24558d 940px, #356595);
}
.backdrop { position: absolute; inset: 0; background: linear-gradient(rgba(20, 50, 90, .25), rgba(255, 255, 255, 0) 10px, rgba(255, 255, 255, 0) 18px, rgba(190, 216, 245, .55)); }
.backdrop i { position: absolute; filter: blur(2px); }
.lit { left: 392px; top: 3px; width: 190px; height: 28px; background: #a9cdf5; }
.blob { top: 5px; width: 16px; height: 15px; background: #4b85d6; }
.drive { left: 208px; top: 6px; opacity: .7; background: linear-gradient(90deg, #6fa58c, #4f86cf); }
.doc1 { left: 400px; }
.doc2 { left: 592px; opacity: .7; }
.smear { top: 9px; height: 9px; background: repeating-linear-gradient(90deg, rgba(50, 80, 120, .4) 0 14px, rgba(50, 80, 120, .12) 18px 22px, rgba(50, 80, 120, .4) 26px 64px, rgba(50, 80, 120, .12) 68px 72px); }
.s1 { left: 234px; width: 130px; opacity: .6; }
.s2 { left: 420px; width: 135px; }
.s3 { left: 614px; width: 150px; opacity: .7; }
.appicon { position: relative; width: 16px; height: 16px; }
.titlebar h1 { position: relative; margin: 0; font: 400 12px/16px "Open Sans", sans-serif; text-shadow: 0 0 6px #fff, 0 0 10px #fff; }
.winbtns {
  position: relative;
  align-self: flex-start;
  display: flex;
  margin-left: auto;
  margin-right: 5px;
  border: 1px solid #16283e;
  border-top: 0;
  border-radius: 0 0 5px 5px;
  box-shadow: 0 0 0 1px rgba(200, 225, 250, .6);
  overflow: hidden;
}
.winbtns button {
  display: grid;
  place-items: center;
  width: 27px;
  height: 18px;
  border-right: 1px solid #223a57;
  background: linear-gradient(#9db3cc, #7793b4 48%, #45668e 50%, #6c8fb6);
}
.winbtns svg { width: 12px; height: 12px; }
.winbtns .close { width: 47px; border: 0; background: linear-gradient(#e0a597, #cf6a58 48%, #b2271b 50%, #cf5534); }
.winbtns .close svg { width: 14px; }

.client {
  flex: 1;
  min-height: 0;
  display: flex;
  flex-direction: column;
  border: 1px solid #475768;
  border-left: 0;
  background: #f0f0f0;
}
.menubar { display: flex; gap: 15px; height: 22px; padding: 2px 10px 0; align-items: center; }
.menubar button { line-height: 16px; }
.menubar u { text-underline-offset: 2px; }

/* Toolbars */
.toolbar {
  display: flex;
  gap: 10px;
  height: 39px;
  padding: 0 4px;
  border-top: 1px solid #b4b4b4;
  box-shadow: inset 0 1px #fff;
}
.group { display: flex; align-items: center; gap: 2px; }
.grip, .splitter { background: radial-gradient(circle at 2px 2px, #ccc 1px, transparent 2px) 0 0 / 4px 4px; }
.grip { width: 5px; height: 28px; background-size: 4px 5px; }
.group button { display: flex; align-items: center; justify-content: center; width: 33px; height: 33px; }
.group svg { width: 24px; height: 24px; }
.group .pressed { border: 1px solid #8f8f8f; border-radius: 3px; background: linear-gradient(#cfcfcf, #dedede); }
.group .drop { width: 45px; justify-content: flex-start; padding-left: 5px; gap: 4px; }
.drop::after { content: ""; border: 5px solid transparent; border-top-color: #000; border-bottom: 0; }
.drop.dim::after { border-top-color: #9c9c9c; }
.c-blue { fill: #2f93cd; }
.c-orange { fill: #e0992b; }
.c-pink { fill: #cc2bbf; }
.c-cube { fill: #1a7ea6; }
.c-cubelite { fill: #78b4cb; }
.abc { font: 9px "Liberation Sans", sans-serif; fill: #111; }
.home { font: bold 7px "Liberation Sans", sans-serif; fill: #111; }
.anno { font: bold 13px "Liberation Serif", serif; fill: #666; }
.lower { height: 38px; }
.lower svg { width: 22px; height: 22px; }

/* Workspace */
.workspace { flex: 1; min-height: 0; display: flex; border-top: 1px solid #b4b4b4; }
.dock { display: flex; flex-direction: column; width: 263px; flex: none; }
.docktitle { display: flex; align-items: center; gap: 2px; height: 21px; padding: 0 1px 3px 4px; }
.docktitle span { padding: 0 7px; font-size: 10px; }
.docktitle i { flex: 1; height: 6px; background: radial-gradient(circle at 2px 2px, #c8c8c8 1px, transparent 2px) 0 0 / 5px 4px; }
.docktitle button { width: 14px; height: 14px; border: 1px solid #777; border-radius: 2px; background: #fafafa; }
.tree {
  flex: 1;
  margin-left: 1px;
  border: 2px solid #4a9fee;
  border-radius: 2px;
  background: repeating-linear-gradient(#999 0 1px, transparent 1px 2px) 8px 0 / 1px 98px no-repeat, #fff;
}
.row {
  display: grid;
  grid-template-columns: 22px 20px 22px 1fr;
  align-items: center;
  height: 20px;
  background: repeating-linear-gradient(90deg, #999 0 1px, transparent 1px 2px) 14px 9px / 6px 1px no-repeat;
}
.row label { padding-left: 2px; border: 1px solid transparent; font: 700 11px/18px "Open Sans", sans-serif; }
.row .focus { border: 1px dotted #222; }
.row svg { width: 19px; height: 19px; }
.exp {
  width: 9px;
  height: 9px;
  margin-left: 4px;
  border: 1px solid #888;
  background: linear-gradient(#333, #333) 1px 3px / 5px 1px no-repeat, #fff;
}
.exp.plus { background: linear-gradient(#333, #333) 1px 3px / 5px 1px no-repeat, linear-gradient(#333, #333) 3px 1px / 1px 5px no-repeat, #fff; }
.sub { display: flex; align-items: center; height: 16px; padding-left: 29px; gap: 2px; }
.sub::before { content: ""; width: 10px; height: 10px; margin-bottom: 8px; border: 1px dotted #999; border-width: 0 0 1px 1px; }
.sub svg { width: 16px; height: 16px; }
input[type="checkbox"] {
  appearance: none;
  display: grid;
  place-items: center;
  width: 13px;
  height: 13px;
  margin: 0;
  border: 1px solid #c4c4c4;
  border-radius: 1px;
  background: #fff;
}
input[type="checkbox"]:checked::before { content: "✖"; font: 12px/11px "DejaVu Sans", sans-serif; color: #000; }
.order { display: flex; align-items: center; gap: 4px; height: 24px; padding-top: 7px; }
.splitter { width: 4px; height: 140px; align-self: center; margin: 0 1px 0 2px; background-size: 4px 5px; }
.canvas { flex: 1; min-width: 0; border: 1px solid #a8a8a8; border-right: 0; background: #fff; }
.canvas svg { width: 100%; height: 100%; }
.edge { fill: #6fa598; stroke: #0a0a0a; stroke-width: 1.3px; stroke-linejoin: round; }
.line { fill: none; stroke: #0a0a0a; stroke-width: 4px; stroke-linejoin: round; }

/* Status bar */
.status {
  display: flex;
  align-items: center;
  gap: 2px;
  height: 28px;
  border-top: 1px solid #b4b4b4;
  box-shadow: inset 0 1px #fff;
  font: 11px/14px "Liberation Sans", sans-serif;
}
.cell { display: flex; align-items: center; height: 22px; border: 1px solid #9a9a9a; border-radius: 1px; }
.first { margin-left: auto; }
.text { padding: 0 4px; }
.grow { flex: none; width: 28%; }
.grow input {
  width: 100%;
  height: 20px;
  border: 2px solid #d0d0d0;
  border-radius: 3px;
  background: #fff;
  font: inherit;
  text-align: center;
}
.status select {
  appearance: none;
  width: 82px;
  height: 20px;
  padding: 0 5px;
  border: 2px solid #ccc;
  border-radius: 3px;
  background:
    linear-gradient(45deg, transparent 50%, #000 50%) 65px 6px / 5px 5px no-repeat,
    linear-gradient(-45deg, transparent 50%, #000 50%) 70px 6px / 5px 5px no-repeat,
    linear-gradient(#ccc, #ccc) 61px 0 / 1px 100% no-repeat,
    #fff;
  font: inherit;
}
.sbtn { width: 22px; height: 20px; display: grid; place-items: center; border: 1px solid #aaa; border-radius: 3px; background: #f6f6f6; }
.sbtn svg { width: 17px; height: 17px; }
.render { gap: 6px; padding: 0 4px 0 3px; }
.epsg { padding: 0 2px; color: #8a8a8a; }
.sizegrip { width: 16px; height: 16px; align-self: flex-end; }
```
